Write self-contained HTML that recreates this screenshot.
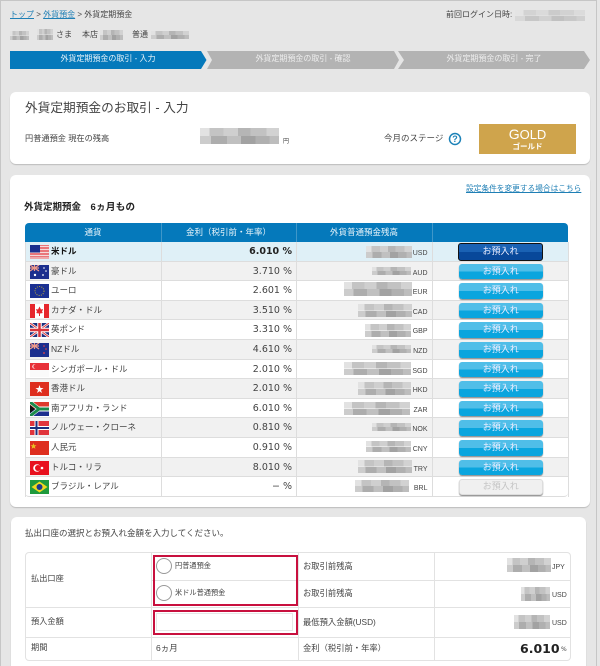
<!DOCTYPE html>
<html lang="ja"><head><meta charset="utf-8"><title>外貨定期預金</title>
<style>
html,body{margin:0;padding:0}
body{position:relative;width:600px;height:666px;overflow:hidden;background:#e6e6e6;font-family:"Liberation Sans","Noto Sans CJK JP",sans-serif;color:#444;font-size:8px}
#w{position:absolute;left:0;top:0;width:600px;height:666px;overflow:hidden;filter:blur(.35px)}
#edge{position:absolute;left:0;top:0;width:597px;height:666px;border:1px solid #c6c6c6;border-bottom:0;box-sizing:border-box;pointer-events:none}
.t{position:absolute;white-space:nowrap;line-height:12px}
a{color:#1f7fb5;text-decoration:underline}
.p{position:absolute;background:#fff;border-radius:6px;box-shadow:0 1px 1px #bbb}
.m{position:absolute;background:linear-gradient(90deg,#e2e2e2 0 12%,#c4c4c4 12% 30%,#cfcfcf 30% 48%,#b5b5b5 48% 64%,#c2c2c2 64% 84%,#d2d2d2 84%) top/100% 50% no-repeat,linear-gradient(90deg,#ccc 0 14%,#adadad 14% 34%,#c0c0c0 34% 52%,#a2a2a2 52% 70%,#b0b0b0 70% 88%,#bdbdbd 88%) bottom/100% 50% no-repeat}
.r{position:absolute;left:25px;width:543px;height:19.6px;border-bottom:1px solid #ddd;box-sizing:border-box;background:#fff}
.g{background:#f1f1f1}
.r svg{position:absolute;left:5px;top:3px}
.n{position:absolute;left:26px;top:3px;line-height:12px;font-size:8.5px;white-space:nowrap}
.v{position:absolute;left:136px;width:131px;top:3px;text-align:right;font:9.5px/13px "DejaVu Sans",sans-serif;color:#444}
.c{position:absolute;left:360px;width:42.5px;top:7px;text-align:right;font:7px/10px "Liberation Sans",sans-serif;color:#444}
.b{position:absolute;left:434px;top:2px;width:83.5px;height:15.5px;border-radius:3px;background:linear-gradient(#50bee8 0 50%,#0aa5de 50%);box-shadow:0 1px 1px #888;color:#eef;font-size:9px;line-height:14.5px;text-align:center}
.l{position:absolute;background:#e2e2e2}
.f{position:absolute;width:1px;top:223px;height:274px;background:#ddd}
.rb{position:absolute;border:2px solid #c8103e;box-sizing:border-box}
.ra{position:absolute;width:16px;height:16px;border:1px solid #999;border-radius:50%;box-sizing:border-box;background:#fff}
</style></head><body>
<div id="w">
<div id="edge"></div>
<div class="t" style="left:10px;top:9px;font-size:8px"><a>トップ</a> &gt; <a>外貨預金</a> &gt; 外貨定期預金</div>
<div class="m" style="left:10px;top:31px;width:19px;height:9px"></div>
<div class="m" style="left:37px;top:29px;width:16px;height:11px"></div>
<div class="t" style="left:56px;top:29px">さま</div>
<div class="t" style="left:82px;top:29px">本店</div>
<div class="m" style="left:100px;top:30px;width:23px;height:10px"></div>
<div class="t" style="left:132px;top:29px">普通</div>
<div class="m" style="left:151px;top:31px;width:38px;height:8px"></div>
<div class="t" style="left:446px;top:9px">前回ログイン日時:</div>
<div class="m" style="left:515px;top:10px;width:70px;height:11px;opacity:.55"></div>

<svg style="position:absolute;left:0;top:50px" width="600" height="20">
<polygon points="10,1 201,1 206.500,10 201,19 10,19" fill="#0579bb"/>
<polygon points="207,1 394,1 399,10 394,19 207,19 212,10" fill="#b3b3b3"/>
<polygon points="398,1 584,1 590,10 584,19 398,19 404,10" fill="#b3b3b3"/>
</svg>
<div class="t" style="left:10px;top:53px;width:196px;text-align:center;color:#e8f4fa;font-size:8px">外貨定期預金の取引 - 入力</div>
<div class="t" style="left:205px;top:53px;width:196px;text-align:center;color:#eee;font-size:8px">外貨定期預金の取引 - 確認</div>
<div class="t" style="left:396px;top:53px;width:196px;text-align:center;color:#eee;font-size:8px">外貨定期預金の取引 - 完了</div>

<div class="p" style="left:10px;top:92px;width:580px;height:72px"></div>
<div class="t" style="left:25px;top:100px;font-size:12.700px;line-height:17px">外貨定期預金のお取引 - 入力</div>
<div class="t" style="left:25px;top:133px;font-size:8.200px">円普通預金 現在の残高</div>
<div class="m" style="left:200px;top:128px;width:79px;height:16px"></div>
<div class="t" style="left:283px;top:136px;font-size:6px">円</div>
<div class="t" style="left:384px;top:132px;font-size:8.500px">今月のステージ</div>
<svg style="position:absolute;left:448px;top:132px" width="14" height="14"><circle cx="7" cy="7" r="5.500" fill="#fff" stroke="#1c82b8" stroke-width="1.500"/><text x="7" y="10" text-anchor="middle" font-family="Liberation Sans" font-size="9" font-weight="700" fill="#1c82b8">?</text></svg>
<div style="position:absolute;left:479px;top:124px;width:97px;height:30px;background:#cfa44c;color:#fff;text-align:center">
<div style="font-size:13px;line-height:14px;margin-top:3px;letter-spacing:0"><span style="font-size:14px">G</span>OLD</div>
<div style="font-size:7.500px;line-height:9px;font-weight:700">ゴールド</div></div>

<div class="p" style="left:10px;top:175px;width:580px;height:332px"></div>
<div class="t" style="left:466px;top:183px;font-size:7.700px"><a>設定条件を変更する場合はこちら</a></div>
<div class="t" style="left:24px;top:202px;font-size:9.500px;font-weight:700;color:#222">外貨定期預金　<span style="letter-spacing:.3px">6ヵ月もの</span></div>

<div style="position:absolute;left:25px;top:223px;width:543px;height:19px;background:#0579bb;border-radius:4px 4px 0 0;color:#e8f4fa;font-size:8.500px;line-height:18px">
<span style="position:absolute;left:0;width:136px;text-align:center">通貨</span>
<span style="position:absolute;left:136px;width:135px;text-align:center">金利（税引前・年率）</span>
<span style="position:absolute;left:271px;width:136px;text-align:center">外貨普通預金残高</span></div>

<div class="r" style="top:242px;background:#dff0f7"><svg width="19" height="14"><rect width="19" height="14" fill="#e9767a"/><path d="M0 1.500h19M0 4.500h19M0 7.500h19M0 10.500h19M0 13h19" stroke="#f4dada" stroke-width="1"/><rect width="10" height="7.500" fill="#1c2f8e"/></svg><span class="n" style="font-weight:700;color:#111">米ドル</span><span class="v" style="font-weight:700;color:#222">6.010 %</span><span class="c">USD</span></div>
<div class="r g" style="top:261.600px"><svg width="19" height="14"><rect width="19" height="14" fill="#1c2f8e"/><path d="M0 0L9 6M9 0L0 6M4.500 0V6M0 3H9" stroke="#e98" stroke-width="1.200"/><circle cx="14" cy="3" r=".8" fill="#fff"/><circle cx="16" cy="6" r=".8" fill="#fff"/><circle cx="13" cy="10" r=".9" fill="#fff"/><circle cx="5" cy="10" r="1.200" fill="#fff"/></svg><span class="n">豪ドル</span><span class="v">3.710 %</span><span class="c">AUD</span></div>
<div class="r" style="top:281.200px"><svg width="19" height="14"><rect width="19" height="14" fill="#1c3192"/><circle cx="9.500" cy="7" r="4.500" fill="none" stroke="#b9a83c" stroke-width="1" stroke-dasharray="1 1.300"/></svg><span class="n">ユーロ</span><span class="v">2.601 %</span><span class="c">EUR</span></div>
<div class="r g" style="top:300.800px"><svg width="19" height="14"><rect width="19" height="14" fill="#fff"/><rect width="5" height="14" fill="#e6262c"/><rect x="14" width="5" height="14" fill="#e6262c"/><path d="M9.500 2.500L11 5.500L13 5L12 8L13 9L10 9.500V12H9V9.500L6 9L7 8L6 5L8 5.500Z" fill="#e6262c"/></svg><span class="n">カナダ・ドル</span><span class="v">3.510 %</span><span class="c">CAD</span></div>
<div class="r" style="top:320.400px"><svg width="19" height="14"><rect width="19" height="14" fill="#1c2f7e"/><path d="M0 0L19 14M19 0L0 14" stroke="#fff" stroke-width="2.500"/><path d="M0 0L19 14M19 0L0 14" stroke="#d8343c" stroke-width="1"/><path d="M9.500 0V14M0 7H19" stroke="#fff" stroke-width="4.500"/><path d="M9.500 0V14M0 7H19" stroke="#d8343c" stroke-width="2.500"/></svg><span class="n">英ポンド</span><span class="v">3.310 %</span><span class="c">GBP</span></div>
<div class="r g" style="top:340px"><svg width="19" height="14"><rect width="19" height="14" fill="#1c2f8e"/><path d="M0 0L9 6M9 0L0 6M4.500 0V6M0 3H9" stroke="#e98" stroke-width="1.200"/><circle cx="14" cy="3" r=".8" fill="#e44"/><circle cx="16" cy="6" r=".8" fill="#e44"/><circle cx="14" cy="10" r=".9" fill="#e44"/></svg><span class="n">NZドル</span><span class="v">4.610 %</span><span class="c">NZD</span></div>
<div class="r" style="top:359.600px"><svg width="19" height="14"><rect width="19" height="14" fill="#fafafa"/><rect width="19" height="7" fill="#e8323a"/><circle cx="4.500" cy="3.500" r="2.200" fill="#fff"/><circle cx="5.300" cy="3.500" r="2" fill="#e8323a"/></svg><span class="n">シンガポール・ドル</span><span class="v">2.010 %</span><span class="c">SGD</span></div>
<div class="r g" style="top:379.200px"><svg width="19" height="14"><rect width="19" height="14" fill="#de2e1e"/><path d="M9.500 3L10.500 6L13.500 6L11 8L12 11L9.500 9.200L7 11L8 8L5.500 6L8.500 6Z" fill="#fff"/></svg><span class="n">香港ドル</span><span class="v">2.010 %</span><span class="c">HKD</span></div>
<div class="r" style="top:398.800px"><svg width="19" height="14"><rect width="19" height="7" fill="#de3a2c"/><rect y="7" width="19" height="7" fill="#1c2f8e"/><path d="M0 0L9 7L0 14" fill="none" stroke="#fff" stroke-width="4"/><path d="M9 7H19" stroke="#fff" stroke-width="5"/><path d="M0 0L9 7L0 14M9 7H19" fill="none" stroke="#1a8a4a" stroke-width="3"/><path d="M0 3L5 7L0 11Z" fill="#111"/></svg><span class="n">南アフリカ・ランド</span><span class="v">6.010 %</span><span class="c">ZAR</span></div>
<div class="r g" style="top:418.400px"><svg width="19" height="14"><rect width="19" height="14" fill="#e0343c"/><path d="M6.500 0V14M0 7H19" stroke="#fff" stroke-width="4"/><path d="M6.500 0V14M0 7H19" stroke="#1c2f7e" stroke-width="2"/></svg><span class="n">ノルウェー・クローネ</span><span class="v">0.810 %</span><span class="c">NOK</span></div>
<div class="r" style="top:438px"><svg width="19" height="14"><rect width="19" height="14" fill="#de2e1e"/><path d="M3.500 2L4.300 4.200L6.500 4.300L4.800 5.600L5.400 7.800L3.500 6.600L1.600 7.800L2.200 5.600L.5 4.300L2.700 4.200Z" fill="#e8c020"/></svg><span class="n">人民元</span><span class="v">0.910 %</span><span class="c">CNY</span></div>
<div class="r g" style="top:457.600px"><svg width="19" height="14"><rect width="19" height="14" fill="#e8101e"/><circle cx="7" cy="7" r="3.800" fill="#fff"/><circle cx="8" cy="7" r="3" fill="#e8101e"/><circle cx="12" cy="7" r="1.300" fill="#fff"/></svg><span class="n">トルコ・リラ</span><span class="v">8.010 %</span><span class="c">TRY</span></div>
<div class="r" style="top:477.200px;height:20px;border-radius:0 0 4px 4px"><svg width="19" height="14"><rect width="19" height="14" fill="#1f9a3c"/><path d="M9.500 1.500L17.500 7L9.500 12.500L1.500 7Z" fill="#f0d820"/><circle cx="9.500" cy="7" r="3" fill="#1c3a8e"/></svg><span class="n">ブラジル・レアル</span><span class="v">− %</span><span class="c">BRL</span></div>

<div class="f" style="left:161px;top:242px;height:255px"></div>
<div class="f" style="left:296px;top:242px;height:255px"></div>
<div class="f" style="left:432px;top:242px;height:255px"></div>
<div class="f" style="left:161px;height:19px;background:#3f97c9"></div>
<div class="f" style="left:296px;height:19px;background:#3f97c9"></div>
<div class="f" style="left:432px;height:19px;background:#3f97c9"></div>
<div class="f" style="left:25px;top:242px;height:255px"></div>
<div class="f" style="left:568px;top:242px;height:255px"></div>

<div class="m" style="left:366px;top:246px;width:46px;height:12px"></div>
<div class="m" style="left:372px;top:267px;width:39px;height:8px"></div>
<div class="m" style="left:344px;top:282px;width:68px;height:14px"></div>
<div class="m" style="left:358px;top:304px;width:54px;height:13px"></div>
<div class="m" style="left:365px;top:324px;width:46px;height:13px"></div>
<div class="m" style="left:372px;top:345px;width:39px;height:8px"></div>
<div class="m" style="left:344px;top:362px;width:67px;height:13px"></div>
<div class="m" style="left:358px;top:382px;width:53px;height:13px"></div>
<div class="m" style="left:344px;top:402px;width:66px;height:13px"></div>
<div class="m" style="left:372px;top:423px;width:39px;height:8px"></div>
<div class="m" style="left:366px;top:441px;width:45px;height:11px"></div>
<div class="m" style="left:358px;top:460px;width:54px;height:13px"></div>
<div class="m" style="left:355px;top:480px;width:54px;height:12px"></div>

<div class="b" style="left:458px;top:243px;width:85px;height:18px;background:linear-gradient(#1a62b4 0 50%,#08489a 50%);border:1px solid #111;box-sizing:border-box;box-shadow:none;line-height:15px">お預入れ</div>
<div class="b" style="left:459px;top:263.600px">お預入れ</div>
<div class="b" style="left:459px;top:283.200px">お預入れ</div>
<div class="b" style="left:459px;top:302.800px">お預入れ</div>
<div class="b" style="left:459px;top:322.400px">お預入れ</div>
<div class="b" style="left:459px;top:342px">お預入れ</div>
<div class="b" style="left:459px;top:361.600px">お預入れ</div>
<div class="b" style="left:459px;top:381.200px">お預入れ</div>
<div class="b" style="left:459px;top:400.800px">お預入れ</div>
<div class="b" style="left:459px;top:420.400px">お預入れ</div>
<div class="b" style="left:459px;top:440px">お預入れ</div>
<div class="b" style="left:459px;top:459.600px">お預入れ</div>
<div class="b" style="left:459px;top:479.200px;background:#f0f0f0;color:#c4c4c4;border:1px solid #ddd;box-sizing:border-box;line-height:13px">お預入れ</div>

<div class="p" style="left:11px;top:517px;width:575px;height:160px"></div>
<div class="t" style="left:25px;top:527px;font-size:8.500px">払出口座の選択とお預入れ金額を入力してください。</div>
<div style="position:absolute;left:25px;top:552px;width:546px;height:109px;border:1px solid #e2e2e2;border-radius:4px;box-sizing:border-box"></div>
<div class="l" style="left:151px;top:552px;width:1px;height:109px"></div>
<div class="l" style="left:298px;top:552px;width:1px;height:109px"></div>
<div class="l" style="left:434px;top:552px;width:1px;height:109px"></div>
<div class="l" style="left:151px;top:580px;width:420px;height:1px"></div>
<div class="l" style="left:25px;top:607px;width:546px;height:1px"></div>
<div class="l" style="left:25px;top:637px;width:546px;height:1px"></div>

<div class="t" style="left:31px;top:573px;font-size:8.200px">払出口座</div>
<div class="t" style="left:31px;top:616px;font-size:8.200px">預入金額</div>
<div class="t" style="left:31px;top:642px;font-size:8.200px">期間</div>
<div class="t" style="left:156px;top:642px;font-size:8.500px">6ヵ月</div>
<div class="rb" style="left:152.500px;top:554.500px;width:145.500px;height:51px"></div>
<div class="ra" style="left:156px;top:558px"></div>
<div class="t" style="left:175px;top:560px;font-size:7.200px">円普通預金</div>
<div class="ra" style="left:156px;top:585px"></div>
<div class="t" style="left:175px;top:587px;font-size:7.200px">米ドル普通預金</div>
<div class="rb" style="left:152.500px;top:609.500px;width:145.500px;height:25.500px"></div>
<div style="position:absolute;left:156px;top:613px;width:137px;height:18px;border:1px solid #e6e6e6;box-sizing:border-box;background:#fff"></div>

<div class="t" style="left:303px;top:560px;font-size:8.300px">お取引前残高</div>
<div class="t" style="left:303px;top:587px;font-size:8.300px">お取引前残高</div>
<div class="t" style="left:303px;top:616px;font-size:8.300px">最低預入金額(USD)</div>
<div class="t" style="left:303px;top:642px;font-size:8.300px">金利（税引前・年率）</div>
<div class="m" style="left:507px;top:558px;width:44px;height:14px"></div>
<div class="t" style="left:552px;top:562px;font-size:7px">JPY</div>
<div class="m" style="left:521px;top:587px;width:29px;height:14px"></div>
<div class="t" style="left:552px;top:590px;font-size:7px">USD</div>
<div class="m" style="left:514px;top:615px;width:36px;height:14px"></div>
<div class="t" style="left:552px;top:618px;font-size:7px">USD</div>
<div class="t" style="left:520px;top:642px;font:700 12.500px/14px 'DejaVu Sans',sans-serif;color:#222">6.010</div>
<div class="t" style="left:561px;top:645px;font:6px/10px 'DejaVu Sans',sans-serif">%</div>
</div>
</body></html>
